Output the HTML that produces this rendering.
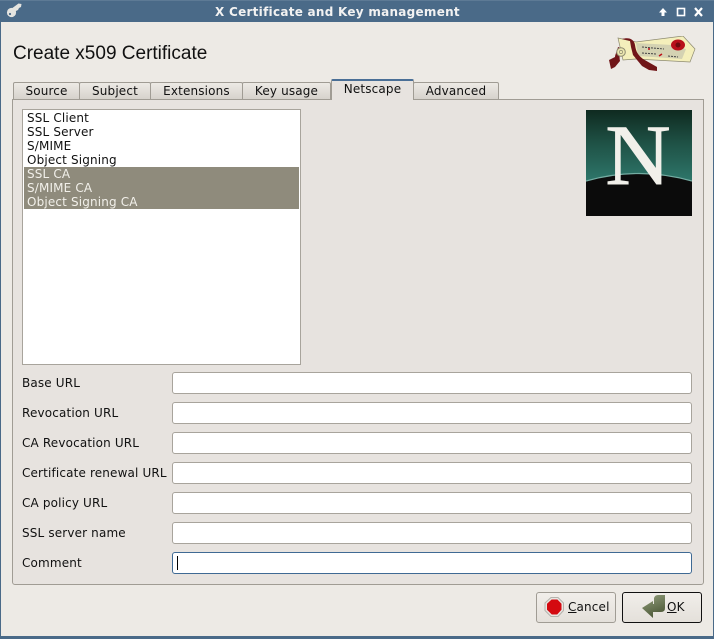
<!DOCTYPE html>
<html><head><meta charset="utf-8"><style>
html,body{margin:0;padding:0;background:#edeae5}
body{width:714px;height:639px;position:relative;overflow:hidden;font:12px/14px "DejaVu Sans",sans-serif;letter-spacing:.15px;color:#111}
div,span{position:absolute;box-sizing:border-box;white-space:nowrap}
u{text-decoration:underline}
.tb{left:0;top:0;width:714px;height:22px;background:#4a6a88;border-top:1px solid #5d7a95}
.edge{background:#4a6a88}
.tab{top:82px;height:18px;background:linear-gradient(#edeae5,#d6d2cc);border:1px solid #a09c94;border-bottom:1px solid #a09c94;border-radius:2px 2px 0 0;text-align:center;line-height:17px}
.panel{left:12px;top:99px;width:692px;height:486px;background:#e7e3df;border:1px solid #a09c94;border-radius:0 0 3px 3px}
.list{left:22px;top:109px;width:279px;height:256px;background:#fff;border:1px solid #a8a49c}
.it{left:27px;height:14px}
.sel{left:24px;top:167px;width:275px;height:42px;background:#8f8b7c}
.lb{left:22px}
.in{left:172px;width:520px;height:22px;background:#fff;border:1px solid #a8a49c;border-radius:3px}
.btn{top:592px;width:80px;height:31px;border-radius:3px;background:linear-gradient(#f1eeea,#e4e0da)}
</style></head><body>
<div class="tb"></div>
<div class="edge" style="left:0;top:22px;width:1px;height:617px"></div>
<div class="edge" style="left:713px;top:22px;width:1px;height:617px"></div>
<div class="edge" style="left:0;top:636px;width:714px;height:3px"></div>
<svg style="position:absolute;left:5px;top:2px" width="18" height="17" viewBox="0 0 18 17"><circle cx="6.5" cy="10.5" r="4.6" fill="#e4e4e0"/><path d="M6 7L13.5 1.5 16.5 2 16 5 14 6 13 8 11 9 9.5 12z" fill="#e4e4e0"/><circle cx="5" cy="12" r="1.1" fill="#4a6a88"/></svg>
<div style="left:0;width:675px;top:5px;text-align:center;color:#f2f2f2;font-weight:bold;font-size:12px;letter-spacing:.27px;line-height:14px">X Certificate and Key management</div>
<svg style="position:absolute;left:655px;top:5px" width="54" height="14" viewBox="0 0 54 14"><path d="M8 3L4 7.5h2.5V11h3V7.5H12z" fill="#fff"/><rect x="22.5" y="3.5" width="7" height="7" fill="none" stroke="#fff" stroke-width="1.6"/><path d="M40 3l7 8M47 3l-7 8" stroke="#fff" stroke-width="2.2" fill="none"/></svg>
<div style="left:13px;top:43px;font:19px/22px 'Liberation Sans',sans-serif;letter-spacing:0;color:#111">Create x509 Certificate</div>
<svg style="position:absolute;left:606px;top:36px" width="92" height="38" viewBox="0 0 92 38"><path d="M12 2L30 6 77 0 89 13 84 26 30 23 17 24z" fill="#f4efbb" stroke="#8d8a70" stroke-width=".7"/><path d="M30 7L66 9 80 13 76 23 32 20z" fill="#d4d2b2"/><path d="M16 3c7-2 12 0 13 6 1 7 3 10 8 14l14 8 0 4-8-1-7-4-9-11-2-8-1-6zM12 11c-1 4-3 8-3 10L3 24 5 33 9 31 14 25c-1-4 0-9 1-13z" fill="#701518"/><circle cx="15" cy="16" r="4.3" fill="#ece7b0" stroke="#8d8a70"/><circle cx="15" cy="16" r="1.6" fill="none" stroke="#8d8a70" stroke-width=".7"/><ellipse cx="72" cy="9" rx="7" ry="5.5" fill="#b8101a"/><circle cx="72" cy="9" r="2.5" fill="#6d0a0e"/><path d="M36 11l22 2M36 17l14 1M62 20l10 1" stroke="#444" stroke-width="1" stroke-dasharray="2 1"/><path d="M53 20l3-2M42 13l2 0" stroke="#c01018" stroke-width="1.5"/></svg>

<div class="panel"></div>
<div class="tab" style="left:13px;width:67px">Source</div>
<div class="tab" style="left:79px;width:72px">Subject</div>
<div class="tab" style="left:150px;width:93px">Extensions</div>
<div class="tab" style="left:242px;width:89px">Key usage</div>
<div class="tab" style="left:413px;width:86px">Advanced</div>
<div style="left:331px;top:79px;width:83px;height:21px;background:#e7e3df;border:1px solid #a09c94;border-top:2px solid #4a6f96;border-bottom:0;border-radius:2px 2px 0 0;text-align:center;line-height:17px">Netscape</div>

<div class="list"></div>
<div class="sel"></div>
<div class="it" style="top:111px">SSL Client</div>
<div class="it" style="top:125px">SSL Server</div>
<div class="it" style="top:139px">S/MIME</div>
<div class="it" style="top:153px">Object Signing</div>
<div class="it" style="top:167px;color:#f2f0ea">SSL CA</div>
<div class="it" style="top:181px;color:#f2f0ea">S/MIME CA</div>
<div class="it" style="top:195px;color:#f2f0ea">Object Signing CA</div>

<svg style="position:absolute;left:586px;top:110px" width="106" height="106" viewBox="0 0 106 106"><defs><linearGradient id="g" x1="0" y1="0" x2="0" y2="1"><stop offset="0" stop-color="#0f2a20"/><stop offset=".3" stop-color="#1e5044"/><stop offset=".65" stop-color="#2d7468"/></linearGradient></defs><rect width="106" height="106" fill="url(#g)"/><path d="M0 71Q53 56 106 71V106H0z" fill="#0b0b0b"/><path d="M0 71Q53 56 106 71" fill="none" stroke="#74aca2" stroke-width="1.2"/><text transform="translate(52 74) scale(1.05 1)" text-anchor="middle" font-family="Liberation Serif,serif" font-size="86" fill="#f1f0ea" stroke="#f1f0ea" stroke-width=".9" letter-spacing="0">N</text></svg>

<div class="lb" style="top:376px">Base URL</div><div class="in" style="top:372px"></div>
<div class="lb" style="top:406px">Revocation URL</div><div class="in" style="top:402px"></div>
<div class="lb" style="top:436px">CA Revocation URL</div><div class="in" style="top:432px"></div>
<div class="lb" style="top:466px">Certificate renewal URL</div><div class="in" style="top:462px"></div>
<div class="lb" style="top:496px">CA policy URL</div><div class="in" style="top:492px"></div>
<div class="lb" style="top:526px">SSL server name</div><div class="in" style="top:522px"></div>
<div class="lb" style="top:556px">Comment</div><div class="in" style="top:552px;border-color:#3f6a94"></div>
<div style="left:177px;top:556px;width:1px;height:14px;background:#000"></div>

<div class="btn" style="left:536px;border:1px solid #a09c94"></div>
<svg style="position:absolute;left:543px;top:596px" width="22" height="22" viewBox="0 0 22 22"><path d="M8 1.5h7l5.5 5.5v7.5L15 20.5H8L2 14.5V7z" fill="#e8e6e2" stroke="#b4b2ac"/><path d="M8.6 3.5h5.8L18.5 7.8v6L14.2 18.5H8.8L4 13.8V7.8z" fill="#d40a10"/></svg>
<div style="left:568px;top:600px"><u>C</u>ancel</div>
<div class="btn" style="left:622px;border:1px solid #111"></div>
<svg style="position:absolute;left:641px;top:594px" width="28" height="26" viewBox="0 0 28 26"><defs><linearGradient id="a" x1="0" y1="0" x2=".4" y2="1"><stop offset="0" stop-color="#94a07e"/><stop offset="1" stop-color="#4f5b3a"/></linearGradient></defs><path d="M1 14L12 7V10H13V4Q14 1 17 1H24V14Q24 18 20 18H12V24Z" fill="url(#a)"/></svg>
<div style="left:667px;top:600px"><u>O</u>K</div>
</body></html>
